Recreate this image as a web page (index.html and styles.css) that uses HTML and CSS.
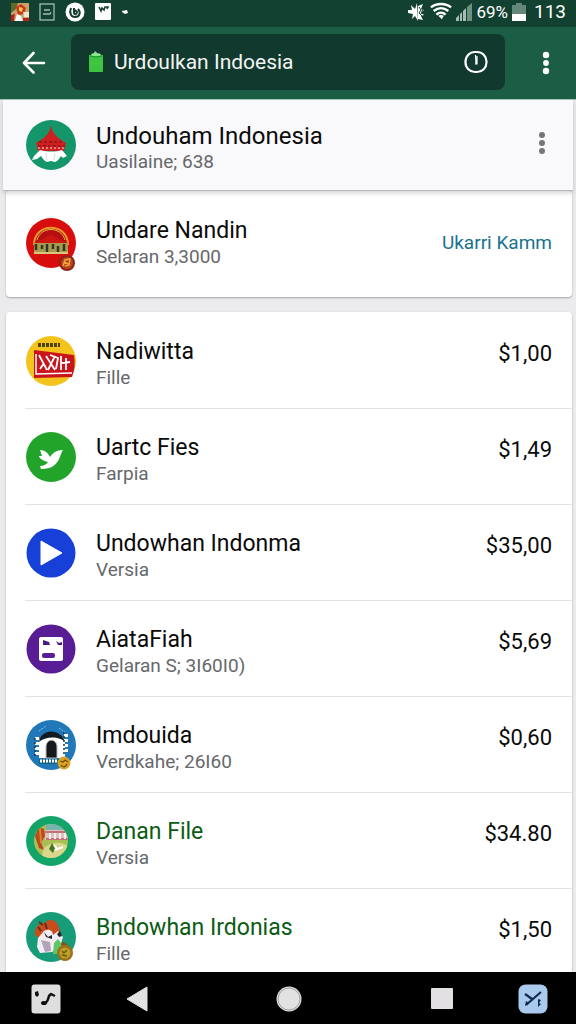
FILE: index.html
```html
<!DOCTYPE html>
<html lang="id">
<head>
<meta charset="UTF-8">
<meta name="viewport" content="width=device-width, initial-scale=1">
<title>Urdoulkan Indoesia</title>
<link rel="stylesheet" href="styles.css">
</head>
<body>
<div class="statusbar">
  <div class="status-left">
    <svg width="18" height="18" viewBox="0 0 18 18"><rect width="18" height="18" fill="#c9a36b"/><path d="M0 0h7l-2 6-5 4z" fill="#5d6b2a"/><path d="M5 4l5-3 5 4-2 6-6 1z" fill="#c8371d"/><path d="M8 4l4 1-1 4-3-1z" fill="#f4c84c"/><path d="M4 18l2-7 4 2 2 5z" fill="#fff"/><path d="M12 9h6v5h-5z" fill="#efe6d0"/><path d="M12 15h6v3h-6zM0 12l4-1-1 7H0z" fill="#b4231c"/></svg>
    <svg width="16" height="18" viewBox="0 0 16 18" fill="none" stroke="#9fbdb0" stroke-width="1.3"><rect x="1" y="1" width="14" height="16"/><path d="M5 7h6M4 11h7l1-2"/></svg>
    <svg width="20" height="20" viewBox="0 0 20 20"><circle cx="10" cy="10" r="9.5" fill="#fff"/><path d="M6 6c-2 5 0 9 4 9 5 0 6-5 3-8M9 6v5c1 2 3 1 3-1l-2-2" fill="none" stroke="#123c2e" stroke-width="2"/></svg>
    <svg width="16" height="17" viewBox="0 0 16 17"><rect width="16" height="17" rx="1" fill="#fff"/><path d="M4 4l2 4 1-3 2 2 1-3h3l-1 2" fill="none" stroke="#173f32" stroke-width="1.6"/></svg>
    <svg width="8" height="6" viewBox="0 0 8 6"><path d="M1 2l5-1 1 3-3 1-3-2z" fill="#fff"/></svg>
  </div>
  <div class="status-right">
    <svg width="19" height="20" viewBox="0 0 19 20"><path d="M1 8h4L4 3l4 4 2-6 1 18-3-5-3 3 1-5-5-1z" fill="#fff"/><path d="M11 4l5-2-2 5 3 1-3 3 3 2-3 1 2 4-5-1z" fill="#fff"/><path d="M12 5l2 3-2 3 3 3M16 7l-2 5" stroke="#123c2e" fill="none"/></svg>
    <svg width="22" height="19" viewBox="0 0 24 19" fill="none" stroke="#fff" stroke-width="2.6"><path d="M1 5c6-5 16-5 22 0M4 9c5-4 11-4 16 0"/><path d="M7 13c3-3 7-3 10 0"/><path d="M9 14l3-1 3 1-2 4z" fill="#fff" stroke="none"/></svg>
    <svg width="16" height="18" viewBox="0 0 16 18"><path d="M0 18v-3l3-3v6zM4 18v-7l2-2v9zM7 18V8l3-3v13z" fill="#a8bdb3"/><path d="M11 18V4l5-4v18z" fill="#6d9282"/></svg>
    <span class="battery-text">69%</span>
    <svg width="14" height="18" viewBox="0 0 14 18"><path d="M4 0h6v2h4v9H0V2h4z" fill="#658779"/><path d="M0 11h14v7H0z" fill="#fff"/></svg>
    <span class="clock">113</span>
  </div>
</div>

<header class="toolbar">
  <button class="icon-btn" aria-label="Back">
    <svg width="24" height="24" viewBox="0 0 24 24" fill="none" stroke="#fff" stroke-width="2.6" stroke-linecap="round" stroke-linejoin="round"><path d="M22 13H2M11.500 3L2 13l9.500 9.500"/></svg>
  </button>
  <div class="search">
    <svg width="16" height="23" viewBox="0 0 16 23"><path d="M1 5h14v16q0 1-1 1H2q-1 0-1-1z" fill="#3fc442"/><path d="M3 4l3-1 1-2 2 2 4 1-1 2H4z" fill="#8be58c"/><path d="M2 6l6 1 6-1" stroke="#1f8e2b" fill="none"/></svg>
    <input class="search-input" type="text" aria-label="Search" value="Urdoulkan Indoesia">
    <button class="icon-btn" aria-label="History">
      <svg width="24" height="24" viewBox="0 0 24 24" fill="none" stroke="#fff"><rect x="1.500" y="2" width="21" height="20" rx="9.500" stroke-width="2.200"/><path d="M11.500 5l.5 9M13 6v8h-2" stroke-width="1.200"/></svg>
    </button>
  </div>
  <button class="icon-btn" aria-label="More options">
    <svg width="8" height="26" viewBox="0 0 8 26" fill="#fff"><circle cx="4" cy="6" r="3.200"/><circle cx="4" cy="14" r="2.900"/><circle cx="4" cy="22" r="3.200"/></svg>
  </button>
</header>

<main class="content">
  <section class="account">
    <svg class="avatar" viewBox="0 0 50 50"><circle cx="25" cy="25" r="25" fill="#14966a"/><path d="M25 5c1 8 6 13 15 18l-2 8H12l-2-8c9-5 14-10 15-18z" fill="#cf1f20"/><path d="M13 22h24M12 26h27" stroke="#8f1718" stroke-width="1.500" stroke-dasharray="3 2"/><path d="M12 28h26" stroke="#e8a49a" stroke-width="1.500" stroke-dasharray="2 2"/><path d="M14 30c8 2 15 2 22 0l5 6-4 2-2-2c-2 3-3 5-6 6l-4-1-4 1c-3-1-4-3-6-6l-4 3-5 1 2-4z" fill="#fff"/><path d="M20 33l1 7M29 33l-1 7" stroke="#d4e2e0"/></svg>
    <div class="text">
      <h1 class="title">Undouham Indonesia</h1>
      <p class="subtitle">Uasilaine; 638</p>
    </div>
    <button class="icon-btn" aria-label="Account options">
      <svg width="8" height="24" viewBox="0 0 8 24" fill="#757575"><circle cx="4" cy="4" r="3"/><circle cx="4" cy="12" r="3"/><circle cx="4" cy="20" r="3"/></svg>
    </button>
  </section>

  <section class="card plan">
    <svg class="avatar tall" viewBox="0 0 50 54"><circle cx="25" cy="26" r="25" fill="#d80d0e"/><path d="M8 28C8 5 42 5 42 28" fill="#b40f12" stroke="#e89b2d" stroke-width="2"/><path d="M11 23C15 9 35 9 39 23" fill="none" stroke="#e6b444"/><path d="M8 26c5-3 11-4 17-9 6 5 12 6 17 9z" fill="#cc1611"/><path d="M8 26h34v11H8z" fill="#a99b4d"/><path d="M10 27v6M16 28v4M21 27v8M27 27v5M32 29v6M38 27v7" stroke="#30352a" stroke-width="2.500"/><path d="M8 36h34" stroke="#d7c779" stroke-width="2"/><circle cx="41" cy="46" r="8" fill="#8e2418"/><circle cx="41" cy="46" r="6" fill="#b8411f"/><path d="M37 49l2-6 5-1-1 6-4 1M38 45l6 3" stroke="#eda637" stroke-width="1.500" fill="none"/></svg>
    <div class="text">
      <h2 class="title">Undare Nandin</h2>
      <p class="subtitle">Selaran 3,3000</p>
    </div>
    <a class="action" href="#">Ukarri Kamm</a>
  </section>

  <ul class="card list">
    <li class="row">
      <svg class="avatar" viewBox="0 0 50 50"><circle cx="25" cy="25" r="25" fill="#f4c31c"/><path d="M12 9h22" stroke="#4f4514" stroke-width="4" stroke-dasharray="3 1"/><path d="M8 14l40 5q2 12-2 22L8 42z" fill="#c9141b"/><path d="M10 18v20l36-1" fill="none" stroke="#fff" stroke-width="1.500"/><path d="M13 19l8 15M14 33l4-6M20 20l9 14M29 20l-7 14M24 19l8 3-2 11M35 20v14M40 22v12M36 27l8-1" stroke="#fff" stroke-width="1.800" fill="none"/></svg>
      <div class="text">
        <h2 class="title">Nadiwitta</h2>
        <p class="subtitle">Fille</p>
      </div>
      <span class="price">$1,00</span>
    </li>
    <li class="row">
      <svg class="avatar" viewBox="0 0 50 50"><circle cx="25" cy="25" r="25" fill="#22a32a"/><path d="M14 18c5 0 8 3 10 7 3-4 6-7 13-7-2 3-2 5-4 9-3 6-7 10-18 10l-1-3c4 0 7-2 8-4-5-1-9-4-9-6l3 0z" fill="#fff"/></svg>
      <div class="text">
        <h2 class="title">Uartc Fies</h2>
        <p class="subtitle">Farpia</p>
      </div>
      <span class="price">$1,49</span>
    </li>
    <li class="row">
      <svg class="avatar" viewBox="0 0 50 50"><circle cx="25" cy="25" r="24.500" fill="#1740d8"/><path d="M15 13l21 12-21 12z" fill="#fff" stroke="#fff" stroke-linejoin="round"/></svg>
      <div class="text">
        <h2 class="title">Undowhan Indonma</h2>
        <p class="subtitle">Versia</p>
      </div>
      <span class="price">$35,00</span>
    </li>
    <li class="row">
      <svg class="avatar" viewBox="0 0 50 50"><circle cx="25" cy="25" r="24.500" fill="#581c94"/><rect x="13" y="13" width="24" height="24" rx="2" fill="#fff"/><path d="M17 16l6 2 1 3h-7zM30 17l3 2 3-1v3h-4z" fill="#4a1a83"/><rect x="16" y="29" width="13" height="5" rx="2" fill="#581c94"/></svg>
      <div class="text">
        <h2 class="title">AiataFiah</h2>
        <p class="subtitle">Gelaran S; 3I60I0)</p>
      </div>
      <span class="price">$5,69</span>
    </li>
    <li class="row">
      <svg class="avatar" viewBox="0 0 50 50"><circle cx="25" cy="25" r="25" fill="#2178b8"/><path d="M13 38V20c4-7 20-7 26 0v18z" fill="#fff"/><path d="M13 22c2-14 22-14 26 0-5-6-20-6-26 0z" fill="#131b21"/><path d="M20 38V27c0-9 11-9 11 0v11z" fill="#16191c" stroke="#b9b9b9"/><path d="M11 17v20M40 14v19" stroke="#fff" stroke-width="4" stroke-dasharray="3 2"/><path d="M9 18v18M38 12v22" stroke="#22323d" stroke-width="1.500" stroke-dasharray="2 2"/><path d="M13 11l7-5M33 8l6 4" stroke="#7fc1e8" stroke-dasharray="2 1"/><path d="M13 39h20v5H13z" fill="#16647f"/><path d="M14 41h17" stroke="#fff" stroke-width="3" stroke-dasharray="2 1"/><circle cx="38" cy="43" r="6.500" fill="#d9a321"/><path d="M34 41l3 1 2-2 3 2M35 45c2 3 5 2 6-1" stroke="#704a0c" fill="none" stroke-width="1.300"/></svg>
      <div class="text">
        <h2 class="title">Imdouida</h2>
        <p class="subtitle">Verdkahe; 26I60</p>
      </div>
      <span class="price">$0,60</span>
    </li>
    <li class="row featured">
      <svg class="avatar" viewBox="0 0 50 50"><circle cx="25" cy="25" r="25" fill="#12a468"/><clipPath id="farm"><circle cx="25" cy="25" r="17"/></clipPath><g clip-path="url(#farm)"><path d="M8 8h34v34H8z" fill="#a9bf55"/><path d="M20 8h22v7H20z" fill="#78b4ae"/><path d="M19 14h24v10H19z" fill="#dfc1bd"/><path d="M19 16h24M20 23h23" stroke="#b85863" stroke-width="1.500"/><path d="M24 17v6M29 17v6M34 17v6M39 17v6" stroke="#f4eeee" stroke-width="2"/><path d="M9 20l4-9 5 2 1 7-4 7 3 7-5-2z" fill="#b9491c"/><path d="M14 12l1 15" stroke="#df8530" stroke-width="2"/><path d="M18 32c6-6 17-7 24-2v12H15z" fill="#d7d68a"/><path d="M23 33l3-6 3 5-2 5z" fill="#477526"/><path d="M28 29l4 5M29 34l8-3" stroke="#fff" stroke-width="2"/></g></svg>
      <div class="text">
        <h2 class="title">Danan File</h2>
        <p class="subtitle">Versia</p>
      </div>
      <span class="price">$34.80</span>
    </li>
    <li class="row featured">
      <svg class="avatar" viewBox="0 0 50 50"><circle cx="25" cy="25" r="25" fill="#179b78"/><path d="M9 23c-1-8 4-12 10-12 3-5 11-3 13 2l3 9-7 4-14 1z" fill="#c94d1c"/><path d="M12 15l3 4M19 11l2 6M13 10l4 3" stroke="#672c1c" stroke-width="2" fill="none"/><path d="M18 19c5-3 9 0 9 4l5-4 5 6-3 10-8 5-12 1-3-6 1-9z" fill="#f2edf2"/><path d="M18 20l4 5 4-2v4l-6-2zM31 22l3-3 2 5-3 1z" fill="#27242a"/><path d="M15 28l4 12 6-1-1-9z" fill="#b3a3b8"/><path d="M27 42l1-11 4-4 5 7-1 8z" fill="#5fc763"/><path d="M36 31l5 4" stroke="#8d4e19" stroke-width="4"/><circle cx="39" cy="41" r="8" fill="#9b701c"/><circle cx="39" cy="41" r="5.500" fill="#bda026"/><path d="M36 39l2 2 3-3M36 43l5 1" stroke="#635811" fill="none" stroke-width="1.300"/></svg>
      <div class="text">
        <h2 class="title">Bndowhan Irdonias</h2>
        <p class="subtitle">Fille</p>
      </div>
      <span class="price">$1,50</span>
    </li>
  </ul>
</main>

<nav class="navbar">
  <button class="icon-btn" aria-label="Music">
    <svg width="30" height="30" viewBox="0 0 30 30"><rect x=".5" y=".5" width="29" height="29" rx="3" fill="#dedede"/><path d="M4 8l3-1 1 4-2 2-2-2z" fill="#111"/><path d="M11 19c5 1 6-3 7-7l2-2 4 2" stroke="#111" stroke-width="2.500" fill="none" stroke-linejoin="round"/><ellipse cx="13" cy="19" rx="3" ry="2" fill="#111"/></svg>
  </button>
  <button class="icon-btn" aria-label="Back">
    <svg width="24" height="28" viewBox="0 0 24 28"><path d="M22 2v24L2 14z" fill="#e2e2e2" stroke="#e2e2e2" stroke-linejoin="round"/></svg>
  </button>
  <button class="icon-btn" aria-label="Home">
    <svg width="26" height="26" viewBox="0 0 26 26"><circle cx="13" cy="13" r="12.500" fill="#e2e2e2"/><circle cx="13" cy="13" r="11" fill="none" stroke="#8b8b8b" stroke-width=".8"/></svg>
  </button>
  <button class="icon-btn" aria-label="Recent apps">
    <svg width="24" height="24" viewBox="0 0 24 24"><rect x="1" y="1" width="22" height="21" rx="1" fill="#e2e0e2"/></svg>
  </button>
  <button class="icon-btn" aria-label="Tools">
    <svg width="30" height="30" viewBox="0 0 30 30"><rect x=".5" y=".5" width="29" height="29" rx="7" fill="#a9caed"/><path d="M7 10l7 5M23 8L8 21" stroke="#122a4e" stroke-width="2.200" fill="none"/><path d="M7 22l1-5 3 2zM20 15l3 1-2 3 2 1-3 3z" fill="#122a4e"/></svg>
  </button>
</nav>
</body>
</html>
```

FILE: styles.css
```css
* {
  box-sizing: border-box;
}

body {
  margin: 0;
  height: 100vh;
  display: flex;
  flex-direction: column;
  overflow: hidden;
  background: #ebebed;
  color: #0a0a0a;
  font-family: Roboto, Arial, sans-serif;
}

h1, h2, p, ul {
  margin: 0;
  padding: 0;
}

svg {
  display: block;
  flex: none;
}

.icon-btn {
  display: flex;
  padding: 0;
  border: 0;
  background: none;
}

/* phone status bar */
.statusbar {
  display: flex;
  justify-content: space-between;
  height: 27px;
  padding: 0 10px 4px 11px;
  background: #124131;
  color: #fff;
}

.status-left, .status-right {
  display: flex;
  align-items: center;
}

.status-left {
  gap: 10px;
}

.status-right {
  gap: 4px;
  font-size: 19px;
}

.battery-text {
  font-size: 17px;
}

.clock {
  margin-left: 4px;
}

/* app bar */
.toolbar {
  display: flex;
  align-items: center;
  gap: 25px;
  height: 73px;
  padding: 0 26px 3px 22px;
  background: #1b5e45;
  border-bottom: 1px solid #a5c3b8;
}

.search {
  flex: 1;
  min-width: 0;
  display: flex;
  align-items: center;
  gap: 10px;
  height: 56px;
  margin-right: 12px;
  padding: 0 17px;
  border-radius: 8px;
  background: #12392d;
}

.search-input {
  flex: 1;
  min-width: 0;
  padding: 0;
  border: 0;
  outline: 0;
  background: none;
  color: #f2f6f4;
  font-family: inherit;
  font-size: 21px;
}

/* content */
.content {
  flex: 1;
  min-height: 0;
  overflow: hidden;
}

.account, .plan, .row {
  display: flex;
  align-items: flex-start;
  gap: 20px;
}

.account {
  position: relative;
  height: 91px;
  margin: 0 3px;
  padding: 20px 27px 0 23px;
  background: #f9f9fb;
  border-bottom: 1px solid #b9b9bc;
  box-shadow: 0 2px 5px rgba(0, 0, 0, 0.18);
}

.account .icon-btn {
  margin-top: 11px;
}

.account .title {
  font-size: 24px;
}

.avatar {
  width: 50px;
  height: 50px;
}

.avatar.tall {
  height: 54px;
}

.text {
  flex: 1;
  min-width: 0;
  padding-top: 2px;
}

.title {
  font-size: 23px;
  font-weight: 400;
  line-height: 28px;
}

.subtitle {
  color: #66686b;
  font-size: 19px;
  line-height: 24px;
}

.card {
  margin: 0 4px 15px 6px;
  background: #fff;
  border-radius: 4px;
  box-shadow: 0 1px 2px rgba(0, 0, 0, 0.3);
}

.plan {
  height: 106px;
  padding: 26px 20px 0 20px;
}

.plan .text {
  padding-top: 0;
}

.action {
  padding-top: 12px;
  color: #19738c;
  font-size: 19px;
  line-height: 28px;
  text-decoration: none;
}

.list {
  padding: 1px 0 0 19px;
  list-style: none;
}

.row {
  height: 96px;
  padding: 23px 20px 0 1px;
  border-bottom: 1px solid #e3e3e5;
}

.row:last-child {
  border-bottom: 0;
}

.featured .title {
  color: #0b5c14;
}

.price {
  padding-top: 2px;
  font-size: 22px;
  line-height: 32px;
}

/* system navigation */
.navbar {
  display: grid;
  grid-template-columns: 30px 1fr 1fr 1fr 30px;
  align-items: center;
  justify-items: center;
  height: 52px;
  padding: 2px 28px 0 31px;
  background: #000;
}
```
